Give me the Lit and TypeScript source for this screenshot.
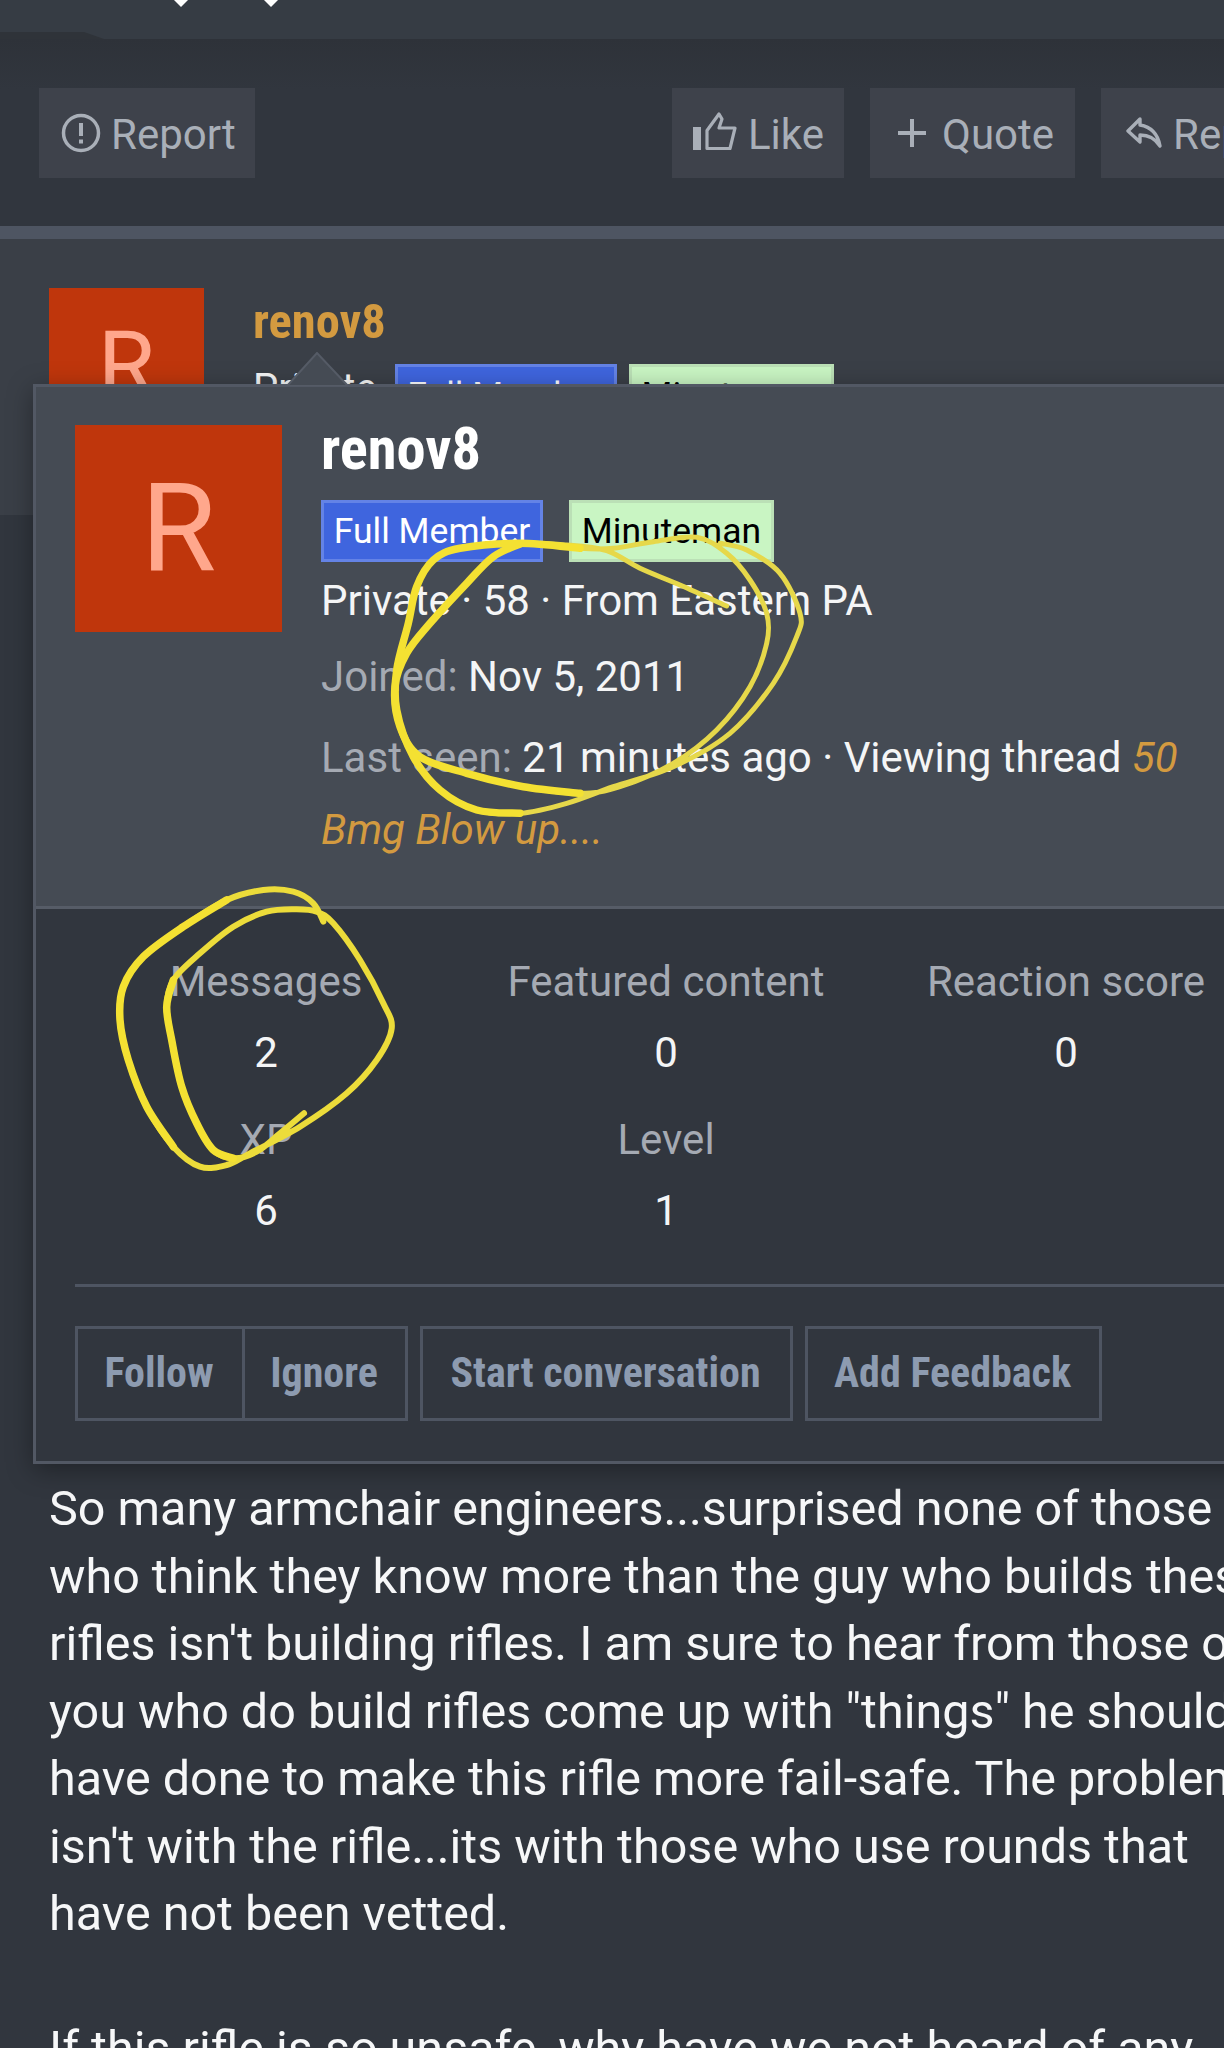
import { LitElement, html, css, svg } from "lit";
import { customElement } from "lit/decorators.js";

type P = [number, number];

// Catmull-Rom through the hand-traced points of a scribble
function smooth(pts: P[]): string {
  let d = `M${pts[0][0]} ${pts[0][1]}`;
  for (let i = 0; i < pts.length - 1; i++) {
    const p0 = pts[Math.max(i - 1, 0)];
    const p1 = pts[i];
    const p2 = pts[i + 1];
    const p3 = pts[Math.min(i + 2, pts.length - 1)];
    const c1: P = [p1[0] + (p2[0] - p0[0]) / 6, p1[1] + (p2[1] - p0[1]) / 6];
    const c2: P = [p2[0] - (p3[0] - p1[0]) / 6, p2[1] - (p3[1] - p1[1]) / 6];
    d += ` C${c1[0].toFixed(1)} ${c1[1].toFixed(1)} ${c2[0].toFixed(1)} ${c2[1].toFixed(1)} ${p2[0].toFixed(1)} ${p2[1].toFixed(1)}`;
  }
  return d;
}

// points traced at 3x from a crop starting at (ox, oy)
const at = (ox: number, oy: number, pts: P[]): P[] => pts.map(([x, y]) => [ox + x / 3, oy + y / 3] as P);

const ringThin = at(380, 530, [
  [1040, 228], [900, 165], [780, 115], [680, 62], [560, 45], [420, 42], [340, 80], [260, 160], [150, 280], [80, 370],
  [45, 470], [60, 590], [120, 680], [260, 730], [430, 770], [600, 790], [720, 770], [880, 700], [1010, 600], [1110, 470],
  [1160, 340], [1160, 250], [1110, 150], [1040, 70], [950, 22], [820, 35], [700, 55], [600, 55], [420, 40], [240, 55],
  [160, 90], [110, 170], [85, 280], [50, 420], [50, 540], [100, 680], [180, 780], [290, 840], [420, 850], [560, 820],
  [700, 770], [880, 710], [1050, 610], [1180, 460], [1250, 320], [1260, 250], [1200, 130], [1100, 60], [1020, 40],
]);
const ringThick = at(380, 530, [
  [420, 42], [340, 80], [260, 160], [150, 280], [80, 370], [45, 470], [60, 590], [120, 680], [260, 730], [430, 770], [600, 790],
]);
const ringThick2 = at(380, 530, [
  [600, 55], [420, 40], [240, 55], [160, 90], [110, 170], [85, 280], [50, 420], [50, 540], [100, 680], [180, 780], [290, 840], [420, 850],
]);
const loop = at(100, 880, [
  [670, 125], [640, 70], [580, 35], [490, 30], [380, 60], [250, 140], [130, 230], [70, 320], [60, 420], [85, 540],
  [140, 680], [220, 800], [300, 860], [380, 855], [450, 820], [600, 740], [740, 640], [830, 540], [875, 445], [850, 370],
  [780, 240], [700, 130], [650, 95], [590, 88], [500, 95], [400, 140], [300, 220], [220, 300], [200, 380], [215, 480],
  [245, 620], [290, 730], [340, 810], [400, 835], [470, 815], [540, 760], [612, 700],
]);
const loopThick = at(100, 880, [[380, 60], [250, 140], [130, 230], [70, 320], [60, 420], [85, 540], [140, 680], [220, 800]]);
const loopThick2 = at(100, 880, [[220, 300], [200, 380], [215, 480], [245, 620], [290, 730], [340, 810], [400, 835]]);

@customElement("app-root")
export class AppRoot extends LitElement {
  static styles = css`
    :host {
      display: block;
      width: 1224px;
      height: 2048px;
      overflow: hidden;
      position: relative;
      background: #31363e;
      font-family: Roboto, "Liberation Sans", sans-serif;
      color: #f4f5f6;
    }
    .cond {
      font-family: "Roboto Condensed", "Liberation Sans Narrow", Roboto, sans-serif;
      font-stretch: 75%;
      font-weight: 700;
    }
    .strip {
      height: 39px;
      background: #363c44;
      position: relative;
    }
    .caret {
      position: absolute;
      top: 0;
      width: 22px;
      height: 8px;
    }
    .caret.a { left: 170px; }
    .caret.b { left: 260px; }
    .notch {
      position: absolute;
      left: 0;
      top: 31px;
      width: 104px;
      height: 8px;
    }
    .actions {
      height: 187px;
      box-sizing: border-box;
      padding: 49px 0 0 39px;
      display: flex;
      align-items: flex-start;
      background: linear-gradient(#2e3239, #31363e 50px);
    }
    .btn {
      height: 90px;
      box-sizing: border-box;
      background: #3e424b;
      color: #a9afb8;
      font-size: 42px;
      display: flex;
      align-items: center;
      flex: none;
    }
    .btn svg { flex: none; }
    .btn span { padding-top: 2px; }
    .report { width: 216px; padding-left: 22px; gap: 10px; margin-right: 417px; }
    .like { width: 172px; padding-left: 21px; gap: 11px; margin-right: 26px; }
    .quote { width: 205px; padding-left: 28px; gap: 16px; margin-right: 26px; }
    .reply { width: 200px; padding-left: 25px; gap: 11px; }
    .band {
      height: 13px;
      background: #4e5562;
    }
    .head {
      height: 276px;
      box-sizing: border-box;
      background: #3a3f47;
      padding: 49px 0 0 49px;
      display: flex;
      gap: 49px;
    }
    .avatar {
      background: #bf360c;
      color: #ffa78c;
      display: flex;
      align-items: center;
      justify-content: center;
      flex: none;
      font-weight: 400;
    }
    .avatar.small { width: 155px; height: 155px; font-size: 93px; }
    .avatar.big { width: 207px; height: 207px; font-size: 122px; }
    .head-name { color: #d39a40; font-size: 48.5px; line-height: 68px; }
    .head-line { display: flex; align-items: flex-start; gap: 12px; font-size: 40px; line-height: 60px; margin-top: 3px; }
    .head-line .badge { margin-top: 5px; }
    .head-line .blue { margin-left: 6px; }
    .badge {
      box-sizing: border-box;
      height: 62px;
      font-size: 35.5px;
      line-height: 56px;
      display: flex;
      align-items: center;
      justify-content: center;
      flex: none;
    }
    .badge.blue { width: 222px; background: #3f65de; color: #fff; border: 3px solid #6483e6; }
    .badge.green { width: 205px; background: #c9f5c3; color: #000; border: 3px solid #bbe0b6; }
    .post {
      padding: 960px 0 0 49px;
      font-size: 48.5px;
      line-height: 67.5px;
      white-space: nowrap;
      color: #f6f7f8;
    }
    .post p { margin: 0 0 67.5px; }
    .popup {
      position: absolute;
      left: 33px;
      top: 384px;
      width: 1266px;
      height: 1080px;
      box-sizing: border-box;
      border: 3px solid #525864;
      background: #31363e;
      box-shadow: 0 6px 24px rgba(0, 0, 0, 0.35);
    }
    .arrow {
      position: absolute;
      left: 250px;
      top: -35px;
      width: 63px;
      height: 34px;
    }
    .pop-head {
      height: 522px;
      box-sizing: border-box;
      background: #454b54;
      border-bottom: 3px solid #565c67;
      padding: 38px 39px 0;
      display: flex;
      gap: 39px;
    }
    .pop-info { min-width: 0; flex: 1; }
    .pop-name { color: #fff; font-size: 58.5px; line-height: 60px; margin-top: -6px; height: 81px; }
    .pop-badges { display: flex; gap: 26px; height: 62px; margin-bottom: 4px; }
    .pop-line { font-size: 42px; line-height: 70px; }
    .pop-line.rank { height: 76px; }
    .pop-line.joined { height: 81px; }
    .pop-line.seen { line-height: 72px; margin-top: -1px; }
    .dim { color: #a5aab3; }
    .orange { color: #d39a40; font-style: italic; }
    .stats {
      display: grid;
      grid-template-columns: repeat(3, 400px);
      grid-auto-rows: 158px;
      margin: 37px 0 0 30px;
      text-align: center;
      font-size: 42px;
    }
    .stats .label { color: #a5aab3; line-height: 71px; }
    .stats .value { color: #f4f5f6; line-height: 71px; }
    .pop-rule {
      height: 3px;
      background: #4e5562;
      margin: 22px 0 0 39px;
    }
    .pop-btns {
      display: flex;
      gap: 12px;
      margin: 39px 0 0 39px;
    }
    .group { display: flex; }
    .pbtn {
      box-sizing: border-box;
      height: 95px;
      border: 3px solid #4e5562;
      color: #8d9bb0;
      font-size: 42px;
      display: flex;
      align-items: center;
      justify-content: center;
      padding: 0 2px 2px 0;
    }
    .follow { width: 170px; }
    .ignore { width: 163px; border-left: 0; }
    .start { width: 373px; }
    .add { width: 297px; }
    .marks {
      position: absolute;
      left: 0;
      top: 0;
      pointer-events: none;
    }
    .marks path {
      fill: none;
      stroke-linecap: round;
      stroke-linejoin: round;
    }
    .marks .thin { stroke: #e6d84a; stroke-width: 5; }
    .marks .mid { stroke: #ecdc3a; stroke-width: 6; }
    .marks .thick { stroke: #f4e132; stroke-width: 7.5; }
  `;

  render() {
    return html`
      <div class="strip">
        <svg class="caret a" viewBox="0 0 22 8"><path d="M4 0h14l-7 7z" fill="#fff"/></svg>
        <svg class="caret b" viewBox="0 0 22 8"><path d="M4 0h14l-7 7z" fill="#fff"/></svg>
        <svg class="notch" viewBox="0 0 104 8"><path d="M0 1h84l20 7H0z" fill="#2f3339"/></svg>
      </div>
      <div class="actions">
        <div class="btn report">
          <svg width="40" height="40" viewBox="0 0 40 40" fill="none" stroke="currentColor" stroke-width="3.5">
            <circle cx="20" cy="20" r="17.5"/>
            <path d="M20 10v13" stroke-width="4"/>
            <path d="M20 26.5v4" stroke-width="4"/>
          </svg>
          <span>Report</span>
        </div>
        <div class="btn like">
          <svg width="44" height="44" viewBox="0 0 44 44" fill="none" stroke="currentColor" stroke-width="3.2">
            <rect x="0" y="16" width="8" height="23" fill="currentColor" stroke="none"/>
            <path d="M14 37.5V19.5L26 3l3 5-3 9h16l-5 20.500H15z" stroke-linejoin="round"/>
          </svg>
          <span>Like</span>
        </div>
        <div class="btn quote">
          <svg width="28" height="28" viewBox="0 0 28 28" stroke="currentColor" stroke-width="4"><path d="M0 14h28M14 0v28"/></svg>
          <span>Quote</span>
        </div>
        <div class="btn reply">
          <svg width="36" height="32" viewBox="0 0 36 32" fill="none" stroke="currentColor" stroke-width="3.4" stroke-linejoin="round">
            <path d="M14 2L2 14l12 11v-7c9 0 15 3 20 11-2-11-8-19-20-21z"/>
          </svg>
          <span>Reply</span>
        </div>
      </div>
      <div class="band"></div>
      <div class="head">
        <div class="avatar small">R</div>
        <div>
          <div class="head-name cond">renov8</div>
          <div class="head-line">
            <span>Private</span>
            <span class="badge blue">Full Member</span>
            <span class="badge green">Minuteman</span>
          </div>
        </div>
      </div>
      <div class="post">
        <p>So many armchair engineers...surprised none of those<br />
        who think they know more than the guy who builds these<br />
        rifles isn't building rifles. I am sure to hear from those of<br />
        you who do build rifles come up with "things" he should<br />
        have done to make this rifle more fail-safe. The problem<br />
        isn't with the rifle...its with those who use rounds that<br />
        have not been vetted.</p>
        <p>If this rifle is so unsafe, why have we not heard of any</p>
      </div>
      <div class="popup">
        <svg class="arrow" viewBox="0 0 63 34">
          <path d="M1 34L31 1l31 33z" fill="#454b54" stroke="#555b66" stroke-width="2"/>
        </svg>
        <div class="pop-head">
          <div class="avatar big">R</div>
          <div class="pop-info">
            <div class="pop-name cond">renov8</div>
            <div class="pop-badges">
              <span class="badge blue">Full Member</span>
              <span class="badge green">Minuteman</span>
            </div>
            <div class="pop-line rank">Private · 58 · From Eastern PA</div>
            <div class="pop-line joined"><span class="dim">Joined:</span> Nov 5, 2011</div>
            <div class="pop-line seen"><span class="dim">Last seen:</span> 21 minutes ago · Viewing thread <span class="orange">50 Bmg Blow up....</span></div>
          </div>
        </div>
        <div class="stats">
          <div><div class="label">Messages</div><div class="value">2</div></div>
          <div><div class="label">Featured content</div><div class="value">0</div></div>
          <div><div class="label">Reaction score</div><div class="value">0</div></div>
          <div><div class="label">XP</div><div class="value">6</div></div>
          <div><div class="label">Level</div><div class="value">1</div></div>
        </div>
        <div class="pop-rule"></div>
        <div class="pop-btns">
          <div class="group">
            <div class="pbtn follow cond">Follow</div>
            <div class="pbtn ignore cond">Ignore</div>
          </div>
          <div class="pbtn start cond">Start conversation</div>
          <div class="pbtn add cond">Add Feedback</div>
        </div>
      </div>
      <svg class="marks" width="1224" height="2048" viewBox="0 0 1224 2048">
        ${svg`
          <path class="thin" d=${smooth(ringThin)}/>
          <path class="thick" d=${smooth(ringThick)}/>
          <path class="thick" d=${smooth(ringThick2)}/>
          <path class="mid" d=${smooth(loop)}/>
          <path class="thick" d=${smooth(loopThick)}/>
          <path class="thick" d=${smooth(loopThick2)}/>
        `}
      </svg>
    `;
  }
}
